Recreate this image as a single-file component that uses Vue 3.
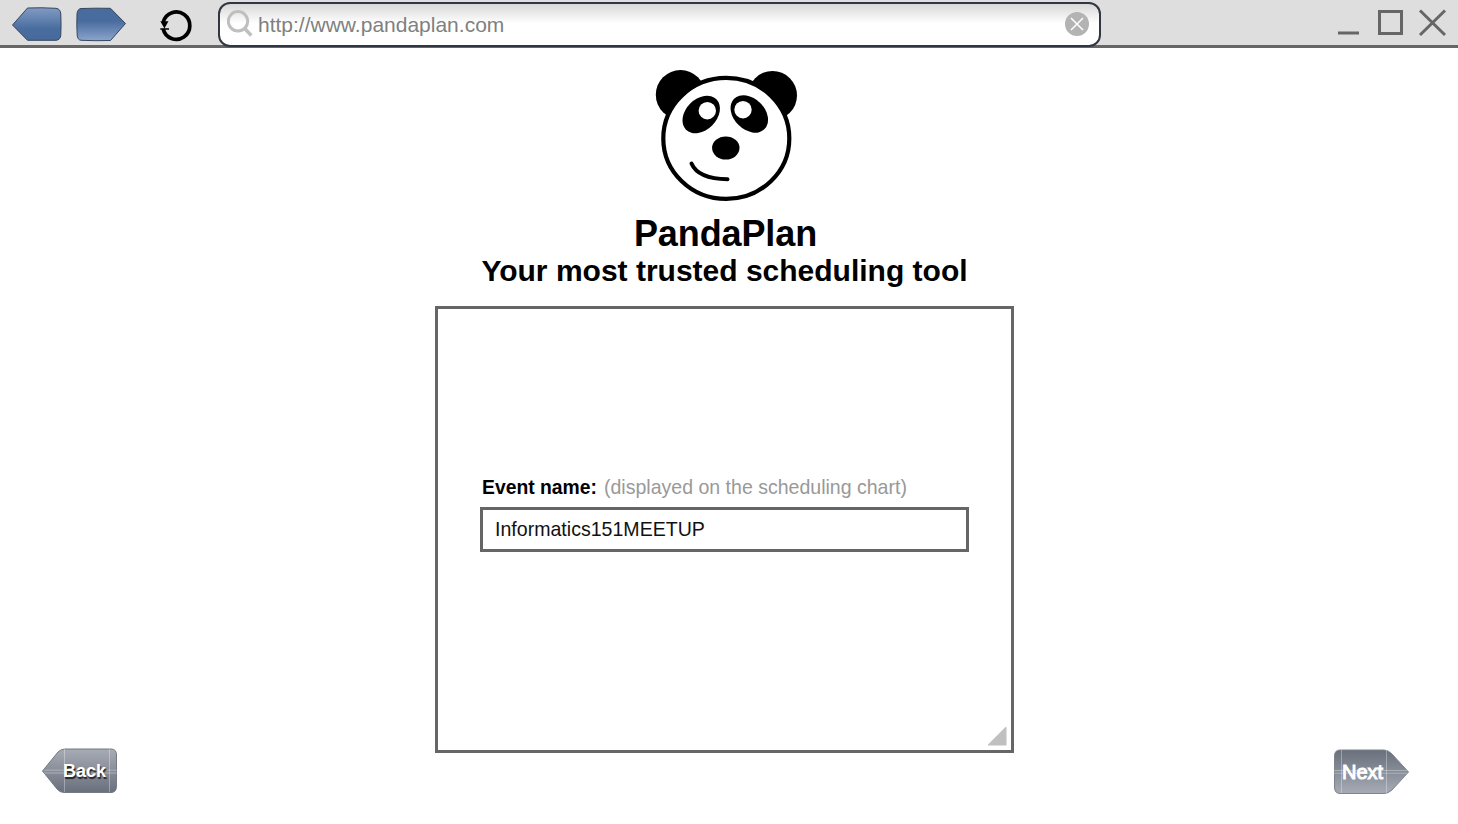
<script setup>
import { ref } from 'vue'

const url = ref('http://www.pandaplan.com')
const eventName = ref('Informatics151MEETUP')
</script>

<template>
  <div class="window">
    <header class="toolbar">
      <nav class="nav">
        <svg class="nav-icons" width="200" height="45" viewBox="0 0 200 45">
          <defs>
            <linearGradient id="blueBack" x1="0" y1="0" x2="0" y2="1">
              <stop offset="0" stop-color="#819bc3" />
              <stop offset=".65" stop-color="#496d9f" />
              <stop offset="1" stop-color="#466a9d" />
            </linearGradient>
            <linearGradient id="blueNext" x1="0" y1="0" x2="0" y2="1">
              <stop offset="0" stop-color="#496c9f" />
              <stop offset=".4" stop-color="#496c9f" />
              <stop offset="1" stop-color="#8ba4cb" />
            </linearGradient>
          </defs>
          <path d="M12.500 25 L27.500 8 Q42 7.400 56 8.300 Q60.500 8.800 60.800 14 Q61.300 25 60.800 35 Q60.500 40 56 40.300 L27.500 40.300Z" fill="url(#blueBack)" stroke="#36475f" />
          <path d="M125.500 23.500 L110.500 8.300 Q96 8 81 8.500 Q77.300 9 77 14 Q76.500 25 77.200 35 Q77.500 40 81 40.300 Q96 41 110.500 40.500Z" fill="url(#blueNext)" stroke="#36475f" />
          <path d="M163.300 22 A13.500 13.700 0 1 1 163.200 29" fill="none" stroke="#000" stroke-width="3.700" />
          <path d="M160.300 21.300H168.500L164.400 28.500Z" fill="#000" />
          <path d="M160.300 29H169" stroke="#000" stroke-width="1.500" />
        </svg>
      </nav>
      <div class="address">
        <svg class="search" width="28" height="30" viewBox="0 0 28 30">
          <circle cx="11" cy="12.300" r="9.700" fill="none" stroke="#bfbfbf" stroke-width="3" />
          <path d="M17.700 19.500L24.300 26.500" stroke="#bfbfbf" stroke-width="3.500" />
        </svg>
        <span class="url">{{ url }}</span>
        <svg class="clear" width="24" height="24" viewBox="0 0 24 24">
          <circle cx="12" cy="12" r="12" fill="#b3b3b3" />
          <path d="M6 6L18 18M18 6L6 18" stroke="#fff" stroke-width="1.500" />
        </svg>
      </div>
      <svg class="controls" width="110" height="45" viewBox="0 0 110 45" fill="none" stroke="#666" stroke-width="3">
        <path d="M0 33H21" />
        <rect x="41.500" y="11.500" width="22" height="22" />
        <path d="M82 10.500L107 35M107 10.500L82 35" />
      </svg>
    </header>

    <main class="page">
      <svg class="panda" width="144" height="134" viewBox="654 68 144 134">
        <circle cx="680.500" cy="94.700" r="24.700" />
        <circle cx="772.500" cy="95.500" r="24.500" />
        <ellipse cx="726.300" cy="138.400" rx="63" ry="60.500" fill="#fff" stroke="#000" stroke-width="4.200" />
        <ellipse cx="701.200" cy="114.500" rx="21.500" ry="15.500" transform="rotate(-45 701.200 114.500)" />
        <ellipse cx="749.300" cy="113.900" rx="21.500" ry="15.500" transform="rotate(45 749.300 113.900)" />
        <circle cx="707.300" cy="110.700" r="8.700" fill="#fff" />
        <circle cx="743" cy="109.700" r="8.700" fill="#fff" />
        <ellipse cx="725.800" cy="148" rx="13.700" ry="11.500" />
        <path d="M691.500 163.500C696 174 708 179 727.500 179.200" fill="none" stroke="#000" stroke-width="4" stroke-linecap="round" />
      </svg>
      <h1 class="title">PandaPlan</h1>
      <h2 class="subtitle">Your most trusted scheduling tool</h2>

      <section class="card">
        <div class="label-row">
          <span class="label">Event name:</span>
          <span class="hint">(displayed on the scheduling chart)</span>
        </div>
        <div class="field"><span class="value">{{ eventName }}</span></div>
        <svg class="grip" width="19" height="19" viewBox="0 0 19 19"><path d="M18.500 0V18.500H0V17.500L17.500 0Z" fill="#c0c0c0" /></svg>
      </section>
    </main>

    <footer class="actions">
      <div class="btn back">
        <svg width="76" height="46" viewBox="0 0 76 46">
          <defs>
            <linearGradient id="grayBack" x1="0" y1="0" x2="0" y2="1">
              <stop offset="0" stop-color="#a7abb4" />
              <stop offset="1" stop-color="#69707c" />
            </linearGradient>
          </defs>
          <path d="M.500 23L16 4Q19 1 23 1H69Q74.500 1 74.500 7V38Q74.500 44.500 69 44.500H22Q18 44.500 15 41Z" fill="url(#grayBack)" stroke="#747984" />
          <path d="M2 22.200H75M2 25H75M22.500 1V44M67.500 1V44" stroke="#fff" stroke-opacity=".32" />
        </svg>
        <span class="btn-text">Back</span>
      </div>
      <div class="btn next">
        <svg width="76" height="46" viewBox="0 0 76 46">
          <defs>
            <linearGradient id="grayNext" x1="0" y1="0" x2="0" y2="1">
              <stop offset="0" stop-color="#69707b" />
              <stop offset="1" stop-color="#a6abb5" />
            </linearGradient>
          </defs>
          <path d="M75.500 23L59 5Q55 1 51 1H7Q1.500 1 1.500 7V38Q1.500 44.500 7 44.500H51Q55 44.500 59 41Z" fill="url(#grayNext)" stroke="#7d828c" />
          <path d="M1 21.500H74M1 24.200H74M8.500 1V44M53.500 1V44" stroke="#fff" stroke-opacity=".32" />
        </svg>
        <span class="btn-text">Next</span>
      </div>
    </footer>
  </div>
</template>

<style>
body {
  margin: 0;
  background: #fff;
}
</style>

<style scoped>
.window {
  width: 1458px;
  height: 824px;
  overflow: hidden;
  display: flex;
  flex-direction: column;
  background: #fff;
  font-family: "Liberation Sans", Arial, sans-serif;
  color: #000;
}
svg {
  display: block;
  flex: none;
}
.toolbar {
  box-sizing: border-box;
  height: 48px;
  flex: none;
  display: flex;
  align-items: flex-start;
  background: #dedede;
  border-bottom: 3px solid #666;
}
.nav {
  width: 218px;
  flex: none;
}
.address {
  box-sizing: border-box;
  width: 883px;
  height: 45px;
  margin-top: 2px;
  padding: 0 10px 0 7px;
  display: flex;
  align-items: center;
  border: 2px solid #303642;
  border-radius: 12px;
  background: linear-gradient(#d4d4d4, #fff 48%);
  background-origin: border-box;
}
.search {
  margin-top: -2px;
}
.url {
  flex: 1;
  margin: 1px 0 0 3px;
  font-size: 21px;
  line-height: 24px;
  color: #808080;
}
.clear {
  margin-top: -1px;
}
.controls {
  margin-left: auto;
  margin-right: 10px;
}
.page {
  flex: none;
  display: flex;
  flex-direction: column;
  align-items: center;
  padding: 20px 9px 0 0;
}
.panda {
  margin-left: 3px;
}
.title,
.subtitle {
  margin: 0;
  font-weight: bold;
  white-space: nowrap;
}
.title {
  margin-top: 11px;
  margin-left: 2px;
  font-size: 36px;
  line-height: 41px;
  letter-spacing: -0.1px;
}
.subtitle {
  font-size: 30px;
  line-height: 34px;
}
.card {
  position: relative;
  box-sizing: border-box;
  width: 579px;
  height: 447px;
  margin-top: 18px;
  padding: 166px 42px 0;
  border: 3px solid #666;
}
.label-row {
  display: flex;
  padding-left: 2px;
  font-size: 21px;
  line-height: 24px;
  white-space: nowrap;
}
.label,
.hint,
.value {
  display: inline-block;
  transform-origin: 0 50%;
}
.label {
  width: 122px;
  font-weight: bold;
  transform: scaleX(0.92);
}
.hint {
  color: #999;
  transform: scaleX(0.93);
}
.value {
  color: #111;
  transform: scaleX(0.932);
}
.field {
  box-sizing: border-box;
  height: 45px;
  margin-top: 8px;
  padding-left: 12px;
  border: 3px solid #666;
  font-size: 21px;
  line-height: 38px;
}
.grip {
  position: absolute;
  right: 4px;
  bottom: 4px;
}
.actions {
  display: flex;
  justify-content: space-between;
  margin-top: -5px;
  padding: 0 49px 0 42px;
}
.btn {
  position: relative;
}
.next {
  margin-top: 1px;
}
.btn-text {
  position: absolute;
  top: 13px;
  left: 21px;
  font-size: 18px;
  line-height: 20px;
  font-weight: bold;
  color: #fff;
}
.back .btn-text {
  text-shadow: 1px 1.500px 1px #222;
}
.next .btn-text {
  left: 9px;
  font-size: 20px;
  font-weight: normal;
  -webkit-text-stroke: 1px #fff;
}
</style>
